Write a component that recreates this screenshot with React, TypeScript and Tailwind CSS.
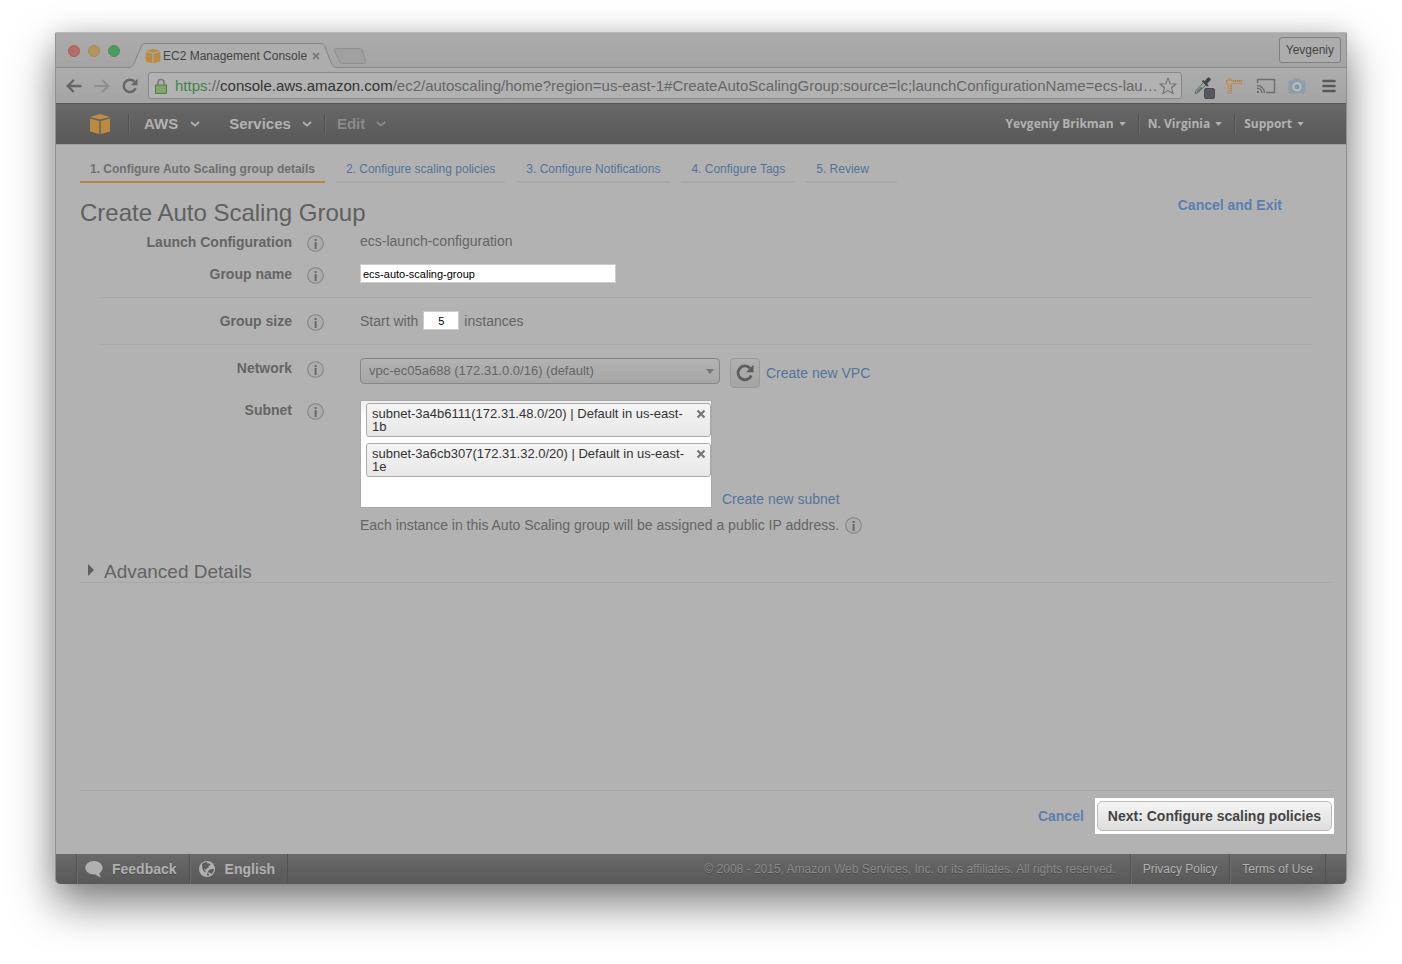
import React from "react";

const SANS = "font-['Liberation_Sans',Arial,sans-serif]";

function AwsCube({ className }: { className: string }) {
  return (
    <svg viewBox="0 0 22 22" className={className} aria-hidden="true">
      <path d="M1 4L11 1l10 3-10 2.600z" fill="#bb8d44" />
      <path d="M1 5.400l9.300 2.500V21L1 18.600z" fill="#b98a40" />
      <path d="M21 5.400l-9.300 2.500V21l9.300-2.400z" fill="#b98a40" />
    </svg>
  );
}

function Chevron() {
  return (
    <svg viewBox="0 0 10 6" className="h-[6px] w-[10px]" fill="none" stroke="currentColor" strokeWidth="1.8" aria-hidden="true">
      <path d="M1 1l4 3.6L9 1" />
    </svg>
  );
}

function Caret({ className }: { className: string }) {
  return (
    <svg viewBox="0 0 8 5" className={className} fill="currentColor" aria-hidden="true">
      <path d="M0 0h8L4 5z" />
    </svg>
  );
}

function Info({ label }: { label: string }) {
  return (
    <button type="button" aria-label={label} className="block size-[17px] shrink-0">
      <svg viewBox="0 0 17 17" className="size-[17px]" aria-hidden="true">
        <circle cx="8.5" cy="8.5" r="7.8" fill="#adadad" stroke="#858585" strokeWidth="1.1" />
        <rect x="7.600" y="4" width="2" height="2" fill="#686868" />
        <rect x="7.600" y="7" width="2" height="7" fill="#686868" />
      </svg>
    </button>
  );
}

function Reload({ className }: { className: string }) {
  return (
    <svg viewBox="0 0 18 18" className={className} aria-hidden="true">
      <path d="M15.300 11.500A6.900 6.900 0 1 1 14 4.200" fill="none" stroke="currentColor" strokeWidth="2.800" />
      <path d="M17.500.8v7.400h-7.400z" fill="currentColor" />
    </svg>
  );
}

function TitleBar() {
  return (
    <div className="flex h-9 items-end bg-gradient-to-b from-[#acacac] to-[#a4a4a4] shadow-[inset_0_1px_0_#b8b8b8,inset_0_-1px_0_#8b8b8b]">
      <div className="flex gap-2 self-center pl-3 pt-[2px]">
        <button type="button" aria-label="Close window" className="size-3 rounded-full border border-[#a95f5c] bg-[#b66c69]" />
        <button type="button" aria-label="Minimize window" className="size-3 rounded-full border border-[#aa8c52] bg-[#b3965c]" />
        <button type="button" aria-label="Zoom window" className="size-3 rounded-full border border-[#479257] bg-[#4c9c5e]" />
      </div>
      <div className="relative ml-2 h-[25px] w-[210px] shrink-0">
        <svg viewBox="0 0 210 25" className="absolute inset-0 h-[25px] w-[210px]" aria-hidden="true">
          <path d="M0 24.5c4 0 5-2 6-4L13 4c1-2.500 2-3.500 5-3.500H192c3 0 4 1 5 3.500l6.500 16.500c1 2 2 4 6 4V25H0z" fill="#adadad" />
          <path d="M0 24.500c4 0 5-2 6-4L13 4c1-2.500 2-3.500 5-3.500H192c3 0 4 1 5 3.500l6.500 16.500c1 2 2 4 6 4" fill="none" stroke="#858585" />
        </svg>
        <div className="relative flex h-full items-center pl-[17px]">
          <AwsCube className="size-4" />
          <span className="ml-[2px] whitespace-nowrap text-[12px] text-[#444]">EC2 Management Console</span>
          <button type="button" aria-label="Close tab" className="ml-[5px] text-[#707070]">
            <svg viewBox="0 0 8 8" className="size-2" stroke="currentColor" strokeWidth="1.5" aria-hidden="true">
              <path d="M1 1l6 6M7 1l-6 6" />
            </svg>
          </button>
        </div>
      </div>
      <button type="button" aria-label="New tab" className="-ml-1 mb-1 h-4 w-8">
        <svg viewBox="0 0 32 16" className="h-4 w-8" aria-hidden="true">
          <path d="M2 .5h23c2 0 3 .8 3.600 2.500l2.800 9.500c.5 2-.2 3-2 3H9c-2 0-3-.8-3.600-2.500L.6 3C.1 1.200.6.5 2 .5z" fill="#a0a0a0" stroke="#8e8e8e" />
        </svg>
      </button>
      <button type="button" className="ml-auto mr-[5px] h-[26px] self-center rounded-[3px] border border-[#7f7f7f] bg-[#adadad] px-[6px] text-[12px] text-[#444]">
        Yevgeniy
      </button>
    </div>
  );
}

function Toolbar() {
  return (
    <div className="flex h-[35px] items-center bg-gradient-to-b from-[#adadad] to-[#a4a4a4] px-[10px]">
      <button type="button" aria-label="Back" className="text-[#666]">
        <svg viewBox="0 0 16 14" className="h-[14px] w-4" fill="none" stroke="currentColor" strokeWidth="2.4" aria-hidden="true">
          <path d="M15.500 7H2M7.800 1L1.800 7l6 6" />
        </svg>
      </button>
      <button type="button" aria-label="Forward" className="ml-3 text-[#8e8e8e]">
        <svg viewBox="0 0 16 14" className="h-[14px] w-4" fill="none" stroke="currentColor" strokeWidth="2.200" aria-hidden="true">
          <path d="M.5 7H14M8.200 1l6 6-6 6" />
        </svg>
      </button>
      <button type="button" aria-label="Reload" className="ml-3 text-[#666]">
        <Reload className="size-4" />
      </button>
      <div className="ml-[10px] flex h-[27px] min-w-0 flex-1 items-center rounded-[3px] border border-[#888] bg-[#b2b2b2] pl-[6px] pr-1">
        <svg viewBox="0 0 12 16" className="h-4 w-3 shrink-0" aria-hidden="true">
          <path d="M3 8V4.500a3 3 0 0 1 6 0V8" fill="none" stroke="#777" strokeWidth="1.500" />
          <rect x=".5" y="7" width="11" height="8.500" fill="#7da268" stroke="#568046" />
          <path d="M1 9.500h10M1 11.500h10M1 13.500h10" stroke="#8fb07c" strokeWidth=".6" />
        </svg>
        <div className="ml-2 flex min-w-0 flex-1 text-[15px] leading-[20px] text-[#666]">
          <span className="text-[#3c8548]">https</span>
          <span>://</span>
          <span className="text-[#333]">console.aws.amazon.com</span>
          <input
            aria-label="Address"
            defaultValue="/ec2/autoscaling/home?region=us-east-1#CreateAutoScalingGroup:source=lc;launchConfigurationName=ecs-lau…"
            className="min-w-0 flex-1 bg-transparent outline-none"
          />
        </div>
        <button type="button" aria-label="Bookmark this page" className="shrink-0">
          <svg viewBox="0 0 18 18" className="size-[18px]" fill="none" stroke="#747474" strokeWidth="1.100" strokeLinejoin="round" aria-hidden="true">
            <path d="M9 1l2.200 5.700 6 .3-4.700 3.800 1.600 6L9 13.400l-5.100 3.400 1.600-6L.8 7l6-.3z" />
          </svg>
        </button>
      </div>
      <div className="flex items-center">
        <button type="button" aria-label="Color picker" className="ml-3 mt-[5px]">
          <svg viewBox="0 0 22 24" className="h-6 w-[22px]" aria-hidden="true">
            <path d="M1 17.500l1-3L9.500 6.500 12 9l-8 7.500z" fill="#9aa59f" stroke="#606060" strokeWidth=".9" />
            <path d="M2.500 15.500l4.500-4.500 1.500 1-4.500 4z" fill="#4a7d63" />
            <path d="M8.500 4.500l5.500 5.500" stroke="#444" strokeWidth="2" />
            <path d="M10.500 6l3-3.700c1.400-1.400 3.800.8 2.300 2.300L12.300 8z" fill="#444" stroke="#444" />
            <rect x="10.500" y="12.500" width="10" height="10" rx="1.500" fill="#55585f" stroke="#4a4c52" />
          </svg>
        </button>
        <button type="button" aria-label="Page ruler" className="ml-[10px]">
          <svg viewBox="0 0 16 16" className="size-4" aria-hidden="true">
            <path d="M.5 2.500H2V.8h3v1.700h10.500v3.300H5.300v9.200H2V5.800H.5z" fill="#bda182" stroke="#ad8a64" strokeWidth=".9" />
            <path d="M7.500 2.500v1.500M9.500 2.500v1.500M11.500 2.500v1.500M13.500 2.500v1.500M3.700 8.500h1.500M3.700 10.500h1.500M3.700 12.500h1.500" stroke="#a07040" strokeWidth=".8" />
          </svg>
        </button>
        <button type="button" aria-label="Cast" className="ml-[14px]">
          <svg viewBox="0 0 20 16" className="h-4 w-5" fill="none" stroke="#6f6f6f" aria-hidden="true">
            <path d="M1.500 5V1.500h17v13H10" strokeWidth="1.500" />
            <path d="M1 7.500a7.500 7.500 0 0 1 7.500 7.500M1 10.200A4.800 4.800 0 0 1 5.800 15" strokeWidth="1.400" />
            <path d="M1 12.700A2.300 2.300 0 0 1 3.300 15H1z" fill="#6f6f6f" stroke="none" />
          </svg>
        </button>
        <button type="button" aria-label="Screenshot" className="ml-3">
          <svg viewBox="0 0 18 16" className="h-4 w-[18px]" aria-hidden="true">
            <path d="M2 2.500h3L6.500.5h5L13 2.500h3q1.500 0 1.500 1.500v10q0 1.500-1.500 1.500H2Q.5 15.500.5 14V4Q.5 2.500 2 2.500z" fill="#8e9dab" />
            <circle cx="9" cy="8.700" r="3.600" fill="#8495a6" stroke="#b8bcc0" strokeWidth="2.100" />
          </svg>
        </button>
        <button type="button" aria-label="Menu" className="ml-4">
          <svg viewBox="0 0 14 14" className="size-[14px]" stroke="#5a5a5a" strokeWidth="2.600" strokeLinecap="round" aria-hidden="true">
            <path d="M1.500 2h11M1.500 7h11M1.500 12h11" />
          </svg>
        </button>
      </div>
    </div>
  );
}

const divider = "border-l border-[#525252] shadow-[inset_1px_0_0_#6c6c6c]";

function ConsoleNav() {
  return (
    <nav className="flex h-[41px] items-center border-t border-[#555] bg-gradient-to-b from-[#686868] to-[#585858] pr-[42px] font-bold text-[#b2b2b2] [text-shadow:0_1px_0_#444]">
      <a href="#home" aria-label="Console home" className="ml-[33px] mr-[17px] block">
        <AwsCube className="size-[22px]" />
      </a>
      <button type="button" className={"flex h-5 items-center gap-3 pl-[15px] pr-7 text-[15px] " + divider}>
        AWS <Chevron />
      </button>
      <button type="button" className="-ml-3 mr-3 flex h-5 items-center gap-[11px] pl-[13px] text-[15px]">
        Services <Chevron />
      </button>
      <button type="button" className={"flex h-5 items-center gap-[11px] pl-3 text-[15px] text-[#8a8a8a] " + divider}>
        Edit <Chevron />
      </button>
      <div className="ml-auto flex font-['Open_Sans',sans-serif] text-[12px]">
        <button type="button" className="flex h-5 items-center gap-[5px] pr-3">
          Yevgeniy Brikman <Caret className="h-1 w-[7px]" />
        </button>
        <button type="button" className={"flex h-5 items-center gap-[5px] pl-[9px] pr-3 " + divider}>
          N. Virginia <Caret className="h-1 w-[7px]" />
        </button>
        <button type="button" className={"flex h-5 items-center gap-[5px] pl-[9px] " + divider}>
          Support <Caret className="h-1 w-[7px]" />
        </button>
      </div>
    </nav>
  );
}

const steps = ["2. Configure scaling policies", "3. Configure Notifications", "4. Configure Tags", "5. Review"];

function Steps() {
  return (
    <ol className="flex gap-[11px] text-[12px] leading-4">
      <li className="border-b-2 border-[#b68541] px-[10px] pb-1 font-bold text-[#6f6f6f]">1. Configure Auto Scaling group details</li>
      {steps.map((step) => (
        <li key={step} className="border-b-2 border-[#a9a9a9] px-[10px] pb-1 last:pr-7">
          <a href="#step" className="text-[#54759a]">{step}</a>
        </li>
      ))}
    </ol>
  );
}

function Row({ label, htmlFor, children }: { label: string; htmlFor?: string; children: React.ReactNode }) {
  return (
    <div className="flex items-start">
      <div className="flex w-[244px] shrink-0 items-start justify-end gap-[15px]">
        {htmlFor ? (
          <label htmlFor={htmlFor} className="pt-px font-bold">{label}</label>
        ) : (
          <span className="pt-px font-bold">{label}</span>
        )}
        <div className="pt-[3px]">
          <Info label={"About " + label} />
        </div>
      </div>
      <div className="ml-9 min-w-0 flex-1">{children}</div>
    </div>
  );
}

function Subnet({ name }: { name: string }) {
  return (
    <li className="flex items-start rounded-[3px] border border-[#aaa] bg-gradient-to-b from-[#f4f4f4] to-[#e8e8e8] py-[3px] pl-[5px] pr-1 text-[13px] leading-[13px] text-[#333]">
      <span className="w-[320px]">{name}</span>
      <button type="button" aria-label={"Remove " + name} className="ml-auto mt-[2px] text-[#777]">
        <svg viewBox="0 0 10 10" className="size-[10px]" stroke="currentColor" strokeWidth="2.200" aria-hidden="true">
          <path d="M1.500 1.500l7 7M8.500 1.500l-7 7" />
        </svg>
      </button>
    </li>
  );
}

function Form() {
  return (
    <form id="group" className="text-[14px] leading-[18px] text-[#656565]">
      <div className="space-y-3">
        <Row label="Launch Configuration">ecs-launch-configuration</Row>
        <Row label="Group name" htmlFor="group-name">
          <input
            id="group-name"
            defaultValue="ecs-auto-scaling-group"
            className="block h-[19px] w-64 border border-[#ccc] bg-white px-[2px] text-[11px] text-black"
          />
        </Row>
      </div>
      <hr className="mx-5 my-[13px] border-[#a9a9a9]" />
      <Row label="Group size" htmlFor="group-size">
        <div className="flex items-center gap-[5px]">
          Start with
          <input id="group-size" defaultValue="5" className="h-[19px] w-9 border border-[#ccc] bg-white text-center text-[11px] text-black" />
          instances
        </div>
      </Row>
      <hr className="mx-5 my-[13px] border-[#a9a9a9]" />
      <div className="space-y-3">
        <Row label="Network" htmlFor="network">
          <div className="flex items-start">
            <div className="relative w-[360px]">
              <select
                id="network"
                className="block h-[26px] w-full appearance-none rounded-[4px] border border-[#868686] bg-gradient-to-b from-[#b2b2b2] to-[#a6a6a6] px-2 text-[13px] text-[#656565]"
              >
                <option>vpc-ec05a688 (172.31.0.0/16) (default)</option>
              </select>
              <Caret className="pointer-events-none absolute right-[6px] top-[11px] h-[5px] w-2 text-[#777]" />
            </div>
            <button
              type="button"
              aria-label="Refresh networks"
              className="ml-[10px] flex size-[30px] items-center justify-center rounded-[4px] border border-[#9a9a9a] bg-gradient-to-b from-[#b0b0b0] to-[#a4a4a4] text-[#5c5c5c]"
            >
              <Reload className="size-[18px]" />
            </button>
            <a href="#vpc" className="ml-[6px] self-center text-[#54759a]">Create new VPC</a>
          </div>
        </Row>
        <Row label="Subnet" htmlFor="subnet">
          <div className="flex items-end gap-[10px]">
            <div className="w-[352px] border border-[#aaa] bg-white bg-gradient-to-b from-[#eee] to-white to-15% pb-1 pl-[5px] pt-[2px]">
              <ul className="space-y-[6px]">
                <Subnet name="subnet-3a4b6111(172.31.48.0/20) | Default in us-east-1b" />
                <Subnet name="subnet-3a6cb307(172.31.32.0/20) | Default in us-east-1e" />
              </ul>
              <input id="subnet" className="mt-1 block h-[22px] w-full bg-transparent text-[13px] text-[#333] outline-none" />
            </div>
            <a href="#subnet" className="text-[#54759a]">Create new subnet</a>
          </div>
          <p className="mt-2 flex items-center gap-[6px]">
            Each instance in this Auto Scaling group will be assigned a public IP address.
            <Info label="About public IP addresses" />
          </p>
        </Row>
      </div>
    </form>
  );
}

export default function App() {
  return (
    <div className={"flex min-h-screen bg-white pb-20 pl-[55px] pr-[55px] pt-8 " + SANS}>
      <div className="flex min-w-0 flex-1 flex-col overflow-hidden rounded-b-[5px] rounded-t-[2px] border-x border-[#919191] bg-[#b2b2b2] shadow-[0_20px_44px_rgba(0,0,0,0.5),0_0_24px_rgba(0,0,0,0.1)]">
        <TitleBar />
        <Toolbar />
        <ConsoleNav />
        <main className="flex flex-1 flex-col border-t border-[#a0a0a0] pl-6 pr-[12px] pt-4">
          <Steps />
          <div className="flex items-start justify-between pr-[52px] pt-[14px]">
            <h1 className="pt-[2px] text-[24px] leading-7 text-[#606060]">Create Auto Scaling Group</h1>
            <a href="#exit" className="text-[14px] font-bold leading-4 text-[#5b80ae]">Cancel and Exit</a>
          </div>
          <div className="pr-[2px] pt-[5px]">
            <Form />
            <button type="button" aria-expanded="false" className="mt-7 flex w-full items-start gap-[10px] border-b border-[#a9a9a9] pl-2 text-[19px] leading-5 text-[#646464]">
              <svg viewBox="0 0 6 12" className="mt-[2px] h-3 w-[6px]" fill="#606060" aria-hidden="true">
                <path d="M0 0l6 6-6 6z" />
              </svg>
              Advanced Details
            </button>
          </div>
          <div className="mr-[2px] mt-auto border-t border-[#a9a9a9]" />
          <div className="flex items-center justify-end gap-[11px] pb-5 pt-[7px]">
            <a href="#cancel" className="text-[14px] font-bold text-[#5b80ae]">Cancel</a>
            <div className="bg-white px-[2px] py-[3px]">
              <button
                type="submit"
                form="group"
                className="block h-[30px] rounded-[5px] border border-[#bbb] bg-gradient-to-b from-[#f5f5f5] to-[#dedede] px-[10px] text-[14px] font-bold text-[#444]"
              >
                Next: Configure scaling policies
              </button>
            </div>
          </div>
        </main>
        <footer className="flex h-[30px] items-center bg-gradient-to-b from-[#696969] to-[#585858] pl-5 pr-5 text-[12px] text-[#b0b0b0] [text-shadow:0_1px_0_#4c4c4c]">
          <a href="#feedback" className={"flex h-full items-center gap-[9px] pl-2 pr-3 text-[14px] font-bold " + divider}>
            <svg viewBox="0 0 18 16" className="h-4 w-[18px]" fill="currentColor" aria-hidden="true">
              <path d="M9 0c4.900 0 8.600 3 8.600 6.800 0 2.300-1.300 4.200-3.200 5.400.1 1.400.8 2.500 2 3.600-2.500.1-4.500-.7-5.700-2.400-5.700.7-10.300-2.300-10.300-6.600C.4 3 4.100 0 9 0z" />
            </svg>
            Feedback
          </a>
          <button type="button" className={"flex h-full items-center gap-[10px] pl-[9px] pr-3 text-[14px] font-bold " + divider}>
            <svg viewBox="0 0 16 16" className="size-4" aria-hidden="true">
              <circle cx="8" cy="8" r="8" fill="#b0b0b0" />
              <path d="M3 3C4.500 1.600 6.500 1 8.500 1.200L8 2.500l2.800 0 .8 1.200-2.200 1.600.6 1-2 1L7 8.600 5.800 8 5 8.600l1.500 1.200.2 1.600-1.200-.3L4 9 3.200 6.500z" fill="#5d5d5d" />
              <path d="M11.500 8.300l3.300-.6c.2 2-1 4.300-2.300 5.300l-2.200-1.500-1.800.3 1-2.200zM8 12l2.300 1.200-.5 1.400-1.600.2z" fill="#5d5d5d" />
            </svg>
            English
          </button>
          <div className={"h-full " + divider} />
          <p className="ml-auto pr-[14px] text-[#8a8a8a]">© 2008 - 2015, Amazon Web Services, Inc. or its affiliates. All rights reserved.</p>
          <a href="#privacy" className={"flex h-full items-center px-3 " + divider}>Privacy Policy</a>
          <a href="#terms" className={"flex h-full items-center px-3 " + divider}>Terms of Use</a>
          <div className={"h-full " + divider} />
        </footer>
      </div>
    </div>
  );
}
